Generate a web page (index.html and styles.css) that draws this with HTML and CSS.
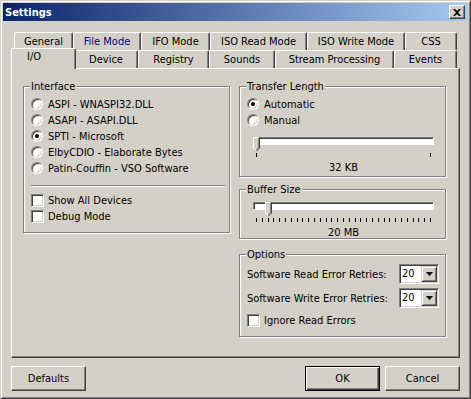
FILE: index.html
```html
<!DOCTYPE html>
<html lang="en">
<head>
  <meta charset="UTF-8">
  <title>Settings</title>
  <link rel="stylesheet" href="styles.css">
</head>
<body>
  <div class="window">
    <div class="titlebar">
      <span class="title">Settings</span>
      <span class="close">
        <svg width="8" height="7" viewBox="0 0 8 7"><path d="M0 0h2l2 2 2-2h2L5 3.5 8 7H6L4 5 2 7H0l3-3.5z" fill="#000"/></svg>
      </span>
    </div>

    <div class="content">
      <div class="tabs">
        <div class="tabrow back">
          <div class="tab">General</div>
          <div class="tab hot">File Mode</div>
          <div class="tab">IFO Mode</div>
          <div class="tab">ISO Read Mode</div>
          <div class="tab">ISO Write Mode</div>
          <div class="tab">CSS</div>
        </div>
        <div class="tabrow front">
          <div class="tab active">I/O</div>
          <div class="tab">Device</div>
          <div class="tab">Registry</div>
          <div class="tab">Sounds</div>
          <div class="tab">Stream Processing</div>
          <div class="tab">Events</div>
        </div>
      </div>

      <div class="panel">
        <div class="col">
          <div class="group interface">
            <div class="legend">Interface</div>
            <div class="opts">
              <div class="opt"><span class="radio"></span>ASPI - WNASPI32.DLL</div>
              <div class="opt"><span class="radio"></span>ASAPI - ASAPI.DLL</div>
              <div class="opt"><span class="radio on"></span>SPTI - Microsoft</div>
              <div class="opt"><span class="radio"></span>ElbyCDIO - Elaborate Bytes</div>
              <div class="opt"><span class="radio"></span>Patin-Couffin - VSO Software</div>
            </div>
            <div class="sep"></div>
            <div class="opt"><span class="check"></span>Show All Devices</div>
            <div class="opt"><span class="check"></span>Debug Mode</div>
          </div>
        </div>

        <div class="col">
          <div class="group transfer">
            <div class="legend">Transfer Length</div>
            <div class="opts">
              <div class="opt"><span class="radio on"></span>Automatic</div>
              <div class="opt"><span class="radio"></span>Manual</div>
            </div>
            <div class="range">
              <div class="slider">
                <div class="track"></div>
                <svg class="thumb" style="left:0px" width="7" height="15" viewBox="0 0 7 15">
                  <polygon points="0,0 7,0 7,11 3.5,14.5 0,11" fill="#d4d0c8"/>
                  <polyline points="0.5,11 0.5,0.5 6,0.5" fill="none" stroke="#fff"/>
                  <polyline points="0.5,11 3,13.5" fill="none" stroke="#fff"/>
                  <polyline points="6.5,0 6.5,11 3.5,14" fill="none" stroke="#404040"/>
                  <polyline points="5.5,1 5.5,10.5 3.5,12.5" fill="none" stroke="#808080"/>
                </svg>
              </div>
              <div class="ticks"><i></i><i></i></div>
              <div class="value">32 KB</div>
            </div>
          </div>

          <div class="group buffer">
            <div class="legend">Buffer Size</div>
            <div class="range">
              <div class="slider">
                <div class="track"></div>
                <svg class="thumb" style="left:12px" width="7" height="15" viewBox="0 0 7 15">
                  <polygon points="0,0 7,0 7,11 3.5,14.5 0,11" fill="#d4d0c8"/>
                  <polyline points="0.5,11 0.5,0.5 6,0.5" fill="none" stroke="#fff"/>
                  <polyline points="0.5,11 3,13.5" fill="none" stroke="#fff"/>
                  <polyline points="6.5,0 6.5,11 3.5,14" fill="none" stroke="#404040"/>
                  <polyline points="5.5,1 5.5,10.5 3.5,12.5" fill="none" stroke="#808080"/>
                </svg>
              </div>
              <div class="ticks">
                <i></i><i></i><i></i><i></i><i></i><i></i><i></i><i></i><i></i><i></i>
                <i></i><i></i><i></i><i></i><i></i><i></i><i></i><i></i><i></i><i></i>
                <i></i><i></i><i></i><i></i><i></i><i></i><i></i><i></i><i></i><i></i>
                <i></i>
              </div>
              <div class="value">20 MB</div>
            </div>
          </div>

          <div class="group options">
            <div class="legend">Options</div>
            <div class="field">
              <span>Software Read Error Retries:</span>
              <div class="combo">
                <span class="combo-text">20</span>
                <span class="combo-btn"><svg width="7" height="4" viewBox="0 0 7 4"><polygon points="0,0 7,0 3.5,4" fill="#000"/></svg></span>
              </div>
            </div>
            <div class="field">
              <span>Software Write Error Retries:</span>
              <div class="combo">
                <span class="combo-text">20</span>
                <span class="combo-btn"><svg width="7" height="4" viewBox="0 0 7 4"><polygon points="0,0 7,0 3.5,4" fill="#000"/></svg></span>
              </div>
            </div>
            <div class="opt last"><span class="check"></span>Ignore Read Errors</div>
          </div>
        </div>
      </div>

      <div class="footer">
        <button class="btn">Defaults</button>
        <div class="actions">
          <button class="btn default">OK</button>
          <button class="btn">Cancel</button>
        </div>
      </div>
    </div>
  </div>
</body>
</html>
```

FILE: styles.css
```css
* {
  box-sizing: border-box;
}
body {
  margin: 0;
  background-color: #d4d0c8;
  color: #000;
  font-family: "DejaVu Sans Condensed", "DejaVu Sans", sans-serif;
  font-stretch: semi-condensed;
  font-size: 11px;
}
.window {
  width: 471px;
  height: 399px;
  padding: 2px;
  background-color: #d4d0c8;
  border: 1px solid;
  border-color: #d4d0c8 #404040 #404040 #d4d0c8;
  box-shadow: inset 1px 1px #fff, inset -1px -1px #808080;
}

/* title bar */
.titlebar {
  height: 18px;
  display: flex;
  align-items: center;
  justify-content: space-between;
  padding: 0 3px 0 2px;
  background: linear-gradient(to right, #0a246a, #a6caf0);
}
.title {
  color: #fff;
  font-weight: bold;
}
.close {
  width: 16px;
  height: 14px;
  display: flex;
  align-items: center;
  justify-content: center;
  background-color: #d4d0c8;
  border: 1px solid;
  border-color: #fff #404040 #404040 #fff;
  box-shadow: inset -1px -1px #808080;
}

.content {
  padding: 11px 8px 0;
}

/* tabs */
.tabrow {
  display: grid;
  height: 18px;
}
.tabrow.back {
  grid-template-columns: 59px 68px 69px 97px 98px 52px;
  margin-left: 3px;
}
.tabrow.front {
  grid-template-columns: 61px 64px 71px 66px 119px 63px;
  margin-left: 2px;
}
.tab {
  padding-top: 1px;
  line-height: 16px;
  text-align: center;
  white-space: nowrap;
  background-color: #d4d0c8;
  border: 1px solid;
  border-bottom: none;
  border-color: #fff #404040 #fff #fff;
  border-radius: 2px 2px 0 0;
  box-shadow: inset -1px 0 #808080;
}
.tab.hot {
  color: #000080;
}
.tab.active {
  position: relative;
  z-index: 1;
  margin: -2px -2px -1px;
  padding: 0 0 0 15px;
  text-align: left;
}

/* page */
.panel {
  height: 290px;
  display: flex;
  gap: 8px;
  padding: 17px 11px 0;
  border: 1px solid;
  border-color: #fff #404040 #404040 #fff;
  box-shadow: inset -1px -1px #808080;
}
.col {
  width: 208px;
  display: flex;
  flex-direction: column;
}
.group {
  width: 207px;
  border: 1px solid #808080;
  box-shadow: inset 1px 1px #fff, 1px 1px #fff;
}
.legend {
  display: table;
  margin: -7px 0 0 6px;
  padding: 0 1px;
  line-height: 13px;
  background-color: #d4d0c8;
}
.interface {
  height: 147px;
}
.transfer {
  height: 91px;
}
.buffer {
  height: 50px;
  margin-top: 12px;
}
.options {
  height: 83px;
  margin-top: 15px;
}

.opts {
  padding-top: 3px;
}
.opt {
  height: 16px;
  display: flex;
  align-items: center;
  gap: 5px;
  padding-left: 7px;
  white-space: nowrap;
}
.opt.last {
  margin-top: 4px;
}
.radio {
  width: 12px;
  height: 12px;
  display: flex;
  align-items: center;
  justify-content: center;
  flex: none;
  border-radius: 50%;
  background-color: #fff;
  border: 1px solid;
  border-color: #808080 #fff #fff #808080;
  box-shadow: inset 1px 1px #404040, inset -1px -1px #d4d0c8;
}
.radio.on::after {
  content: "";
  width: 4px;
  height: 4px;
  border-radius: 50%;
  background-color: #000;
}
.check {
  width: 13px;
  height: 13px;
  flex: none;
  margin-right: -1px;
  background-color: #fff;
  border: 1px solid;
  border-color: #808080 #fff #fff #808080;
  box-shadow: inset 1px 1px #404040, inset -1px -1px #d4d0c8;
}
.sep {
  height: 2px;
  margin: 9px 4px 5px 7px;
  border-top: 1px solid #808080;
  border-bottom: 1px solid #fff;
}

/* trackbars */
.range {
  width: 181px;
  margin-left: 13px;
}
.transfer .range {
  margin-top: 9px;
}
.buffer .range {
  margin-top: 6px;
}
.slider {
  position: relative;
  height: 15px;
}
.track {
  height: 8px;
  margin-top: 2px;
  background-color: #fff;
  border: 1px solid;
  border-color: #808080 #fff #fff #808080;
  box-shadow: inset 1px 1px #404040;
}
.thumb {
  position: absolute;
  top: 0;
}
.ticks {
  height: 4px;
  display: flex;
  justify-content: space-between;
  margin: 1px 3px 0;
}
.ticks i {
  width: 1px;
  background-color: #000;
}
.value {
  margin-top: 4px;
  line-height: 13px;
  text-align: center;
}

/* options */
.field {
  height: 20px;
  display: flex;
  align-items: center;
  justify-content: space-between;
  padding: 0 6px 0 7px;
  margin-top: 3px;
}
.field + .field {
  margin-top: 4px;
}
.combo {
  width: 40px;
  height: 20px;
  display: flex;
  padding: 1px;
  background-color: #fff;
  border: 1px solid;
  border-color: #808080 #fff #fff #808080;
  box-shadow: inset 1px 1px #404040, inset -1px -1px #d4d0c8;
}
.combo-text {
  flex: 1;
  padding-left: 1px;
  line-height: 16px;
}
.combo-btn {
  width: 16px;
  height: 16px;
  display: flex;
  align-items: center;
  justify-content: center;
  background-color: #d4d0c8;
  border: 1px solid;
  border-color: #d4d0c8 #404040 #404040 #d4d0c8;
  box-shadow: inset 1px 1px #fff, inset -1px -1px #808080;
}

/* buttons */
.footer {
  display: flex;
  justify-content: space-between;
  margin-top: 8px;
}
.actions {
  display: flex;
  gap: 5px;
}
.btn {
  width: 75px;
  height: 25px;
  padding: 0;
  font: inherit;
  color: #000;
  background-color: #d4d0c8;
  border: 1px solid;
  border-color: #fff #404040 #404040 #fff;
  box-shadow: inset -1px -1px #808080;
}
.btn.default {
  border-color: #000;
  box-shadow: inset 1px 1px #fff, inset -1px -1px #404040, inset -2px -2px #808080;
}
```
